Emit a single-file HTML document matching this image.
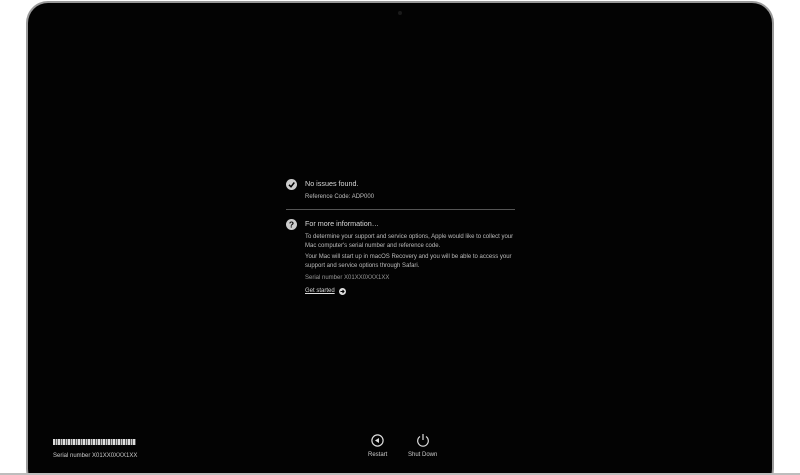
<!DOCTYPE html><html><head><style>
html,body{margin:0;width:800px;height:475px;overflow:hidden;}
body{background:#fff;position:relative;font-family:"Liberation Sans",sans-serif;}
.frame{position:absolute;left:26px;top:1px;width:748px;height:490px;border-radius:22px;background:#9a9a9a;}
.scr{position:absolute;left:28px;top:3px;width:744px;height:486px;border-radius:20px;background:#030303;}
.bot{position:absolute;left:0;top:473px;width:800px;height:2px;background:#bdbdbd;}
.t{position:absolute;color:#d8d8d8;white-space:nowrap;}
.s{font-size:6px;color:#bdbdbd;line-height:9px;}
</style></head><body>
<div class="frame"></div><div class="scr"></div><div class="bot"></div>
<div style="position:absolute;left:398px;top:11px;width:4px;height:4px;border-radius:50%;background:#1a1a1a"></div>
<svg style="position:absolute;left:286px;top:179px" width="11" height="11"><circle cx="5.5" cy="5.5" r="5.5" fill="#ccc"/><path d="M3 5.8L5 7.8L8.3 3.5" stroke="#000" stroke-width="1.5" fill="none"/></svg>
<div class="t" style="left:305px;top:179px;font-size:7.2px">No issues found.</div>
<div class="t s" style="left:305px;top:193px">Reference Code: ADP000</div>
<div style="position:absolute;left:286px;top:209px;width:229px;height:1px;background:#555"></div>
<svg style="position:absolute;left:286px;top:219px" width="11" height="11"><circle cx="5.5" cy="5.5" r="5.5" fill="#ccc"/><text x="5.5" y="8.6" text-anchor="middle" font-size="8.5" font-weight="bold" font-family="Liberation Sans" fill="#000">?</text></svg>
<div class="t" style="left:305px;top:219px;font-size:7.2px">For more information…</div>
<div class="t s" style="left:305px;top:233px">To determine your support and service options, Apple would like to collect your<br>Mac computer's serial number and reference code.</div>
<div class="t s" style="left:305px;top:253px">Your Mac will start up in macOS Recovery and you will be able to access your<br>support and service options through Safari.</div>
<div class="t s" style="left:305px;top:274px;color:#999">Serial number X01XX0XXX1XX</div>
<div class="t s" style="left:305px;top:287px;text-decoration:underline;color:#ddd">Get started</div>
<svg style="position:absolute;left:339px;top:288px" width="7" height="7"><circle cx="3.5" cy="3.5" r="3.5" fill="#ddd"/><path d="M1.5 3.5H5M3.5 2L5 3.5L3.5 5" stroke="#000" stroke-width="1" fill="none"/></svg>
<div style="position:absolute;left:53px;top:439px;width:83px;height:6px;background:repeating-linear-gradient(90deg,#ddd 0 2px,#555 2px 3px,#ccc 3px 4px,#666 4px 5px)"></div>
<div class="t s" style="left:53px;top:452px;color:#ccc">Serial number X01XX0XXX1XX</div>
<svg style="position:absolute;left:371px;top:434px" width="13" height="13"><circle cx="6.5" cy="6.5" r="5.6" stroke="#ddd" stroke-width="1.2" fill="none"/><path d="M4 6.5L8 4V9Z" fill="#ddd"/></svg>
<div class="t s" style="left:368px;top:451px;color:#ccc">Restart</div>
<svg style="position:absolute;left:416px;top:433px" width="14" height="14"><path d="M4 3.5A5.3 5.3 0 1 0 10 3.5" stroke="#ddd" stroke-width="1.2" fill="none"/><path d="M7 1V7" stroke="#ddd" stroke-width="1.2"/></svg>
<div class="t s" style="left:408px;top:451px;color:#ccc">Shut Down</div>
</body></html>
